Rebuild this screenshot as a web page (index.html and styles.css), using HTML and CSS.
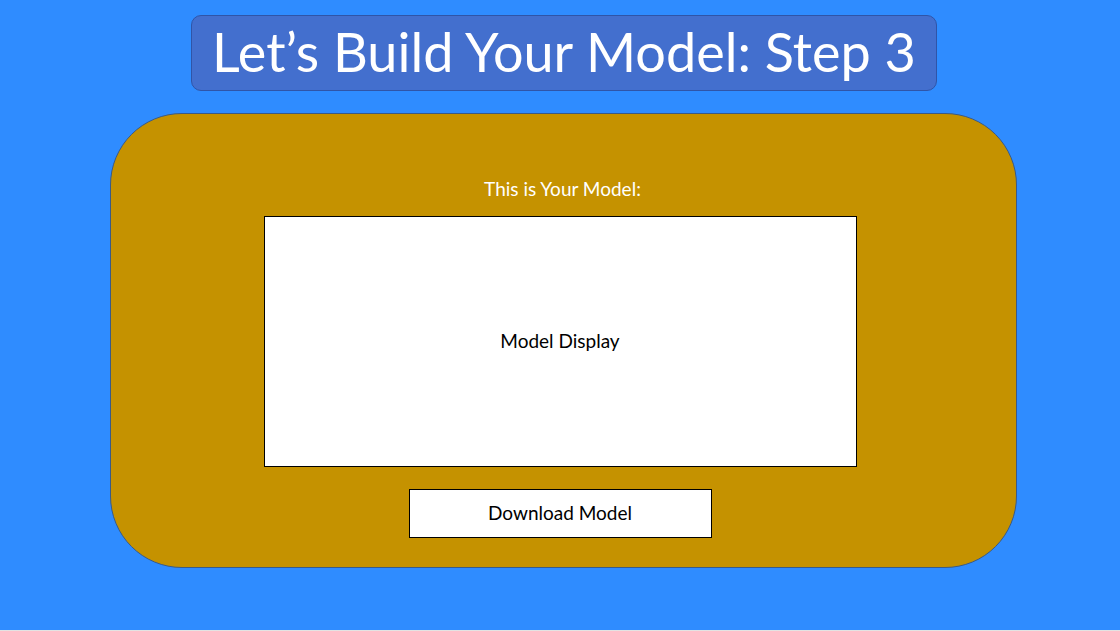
FILE: index.html
```html
<!DOCTYPE html>
<html>
<head>
<meta charset="utf-8">
<link rel="stylesheet" href="styles.css">
</head>
<body>
<div class="page">
  <div class="title">Let’s Build Your Model: Step 3</div>
  <div class="panel">
    <div class="label">This is Your Model:</div>
    <div class="display">Model Display</div>
    <div class="button">Download Model</div>
  </div>
</div>
</body>
</html>
```
FILE: styles.css
```css
html { background: #e3e3e3; }
body { margin: 0; font-family: "Lato", "Open Sans", sans-serif; }
.page {
  height: 630px;
  background: #2f8cff;
  display: flex;
  flex-direction: column;
  align-items: center;
}
.title {
  box-sizing: border-box;
  margin-top: 15px;
  margin-left: 8px;
  width: 746px;
  height: 76px;
  background: #436fce;
  border: 1px solid #2f55a8;
  border-radius: 10px;
  color: #fff;
  font-size: 54px;
  display: flex;
  align-items: center;
  justify-content: center;
  padding-bottom: 4px;
}
.panel {
  box-sizing: border-box;
  margin-top: 22px;
  margin-left: 7px;
  width: 907px;
  height: 455px;
  background: #c59200;
  border: 1px solid #3a5a86;
  border-radius: 72px;
  display: flex;
  flex-direction: column;
  align-items: center;
  padding-top: 65px;
}
.label {
  color: #fff;
  font-size: 19px;
  line-height: 22px;
  height: 37px;
  margin-left: -2px;
  margin-top: -1px;
  padding-bottom: 1px;
}
.display {
  box-sizing: border-box;
  width: 593px;
  height: 251px;
  background: #fff;
  border: 1px solid #000;
  display: flex;
  align-items: center;
  justify-content: center;
  font-size: 19px;
  color: #000;
  margin-left: -7px;
  padding-bottom: 3px;
}
.button {
  box-sizing: border-box;
  margin-top: 22px;
  width: 303px;
  height: 49px;
  background: #fff;
  border: 1px solid #000;
  display: flex;
  align-items: center;
  justify-content: center;
  font-size: 19px;
  color: #000;
  margin-left: -7px;
  padding-bottom: 2px;
}
```
